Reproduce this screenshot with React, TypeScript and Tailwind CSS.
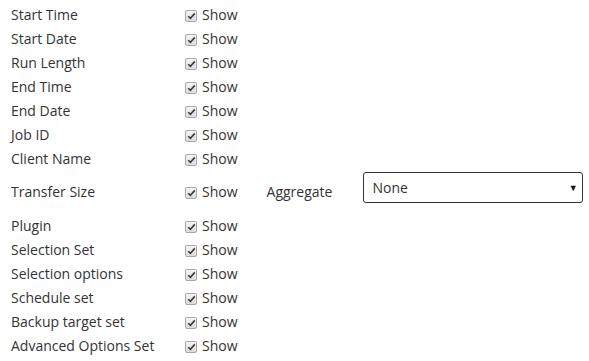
import React from "react";

const rows = [
  "Start Time",
  "Start Date",
  "Run Length",
  "End Time",
  "End Date",
  "Job ID",
  "Client Name",
  "Transfer Size",
  "Plugin",
  "Selection Set",
  "Selection options",
  "Schedule set",
  "Backup target set",
  "Advanced Options Set",
];

const Check = () => (
  <span className="mt-[3px] flex h-[12px] w-[12px] items-center justify-center rounded-[2px] border border-[#a8a8a8] bg-gradient-to-b from-[#f6f6f6] to-[#dcdcdc]">
    <svg width="9" height="8" viewBox="0 0 9 8">
      <path d="M1.2 4.2 L3.4 6.4 L7.8 1.4" fill="none" stroke="#3a3a3a" strokeWidth="1.6" />
    </svg>
  </span>
);

const App = () => {
  return (
    <div className="flex flex-col pl-[11px] pt-[2px] text-[14px] text-[#333] [font-family:'Open_Sans',sans-serif]">
      {rows.map((r) => {
        const agg = r === "Transfer Size";
        return (
          <div key={r} className={`flex items-center ${agg ? "h-[43px]" : "h-[24px]"}`}>
            <span className="w-[174px]">{r}</span>
            <Check />
            <span className="ml-[5px]">Show</span>
            {agg && (
              <>
                <span className="ml-[29px] w-[96px]">Aggregate</span>
                <div className="mb-[8px] flex h-[31px] w-[220px] items-center justify-between rounded-[3px] border border-[#333] pl-[9px] pr-[4px]">
                  <span>None</span>
                  <span className="text-[9px] text-[#111]">▼</span>
                </div>
              </>
            )}
          </div>
        );
      })}
    </div>
  );
};

export default App;
